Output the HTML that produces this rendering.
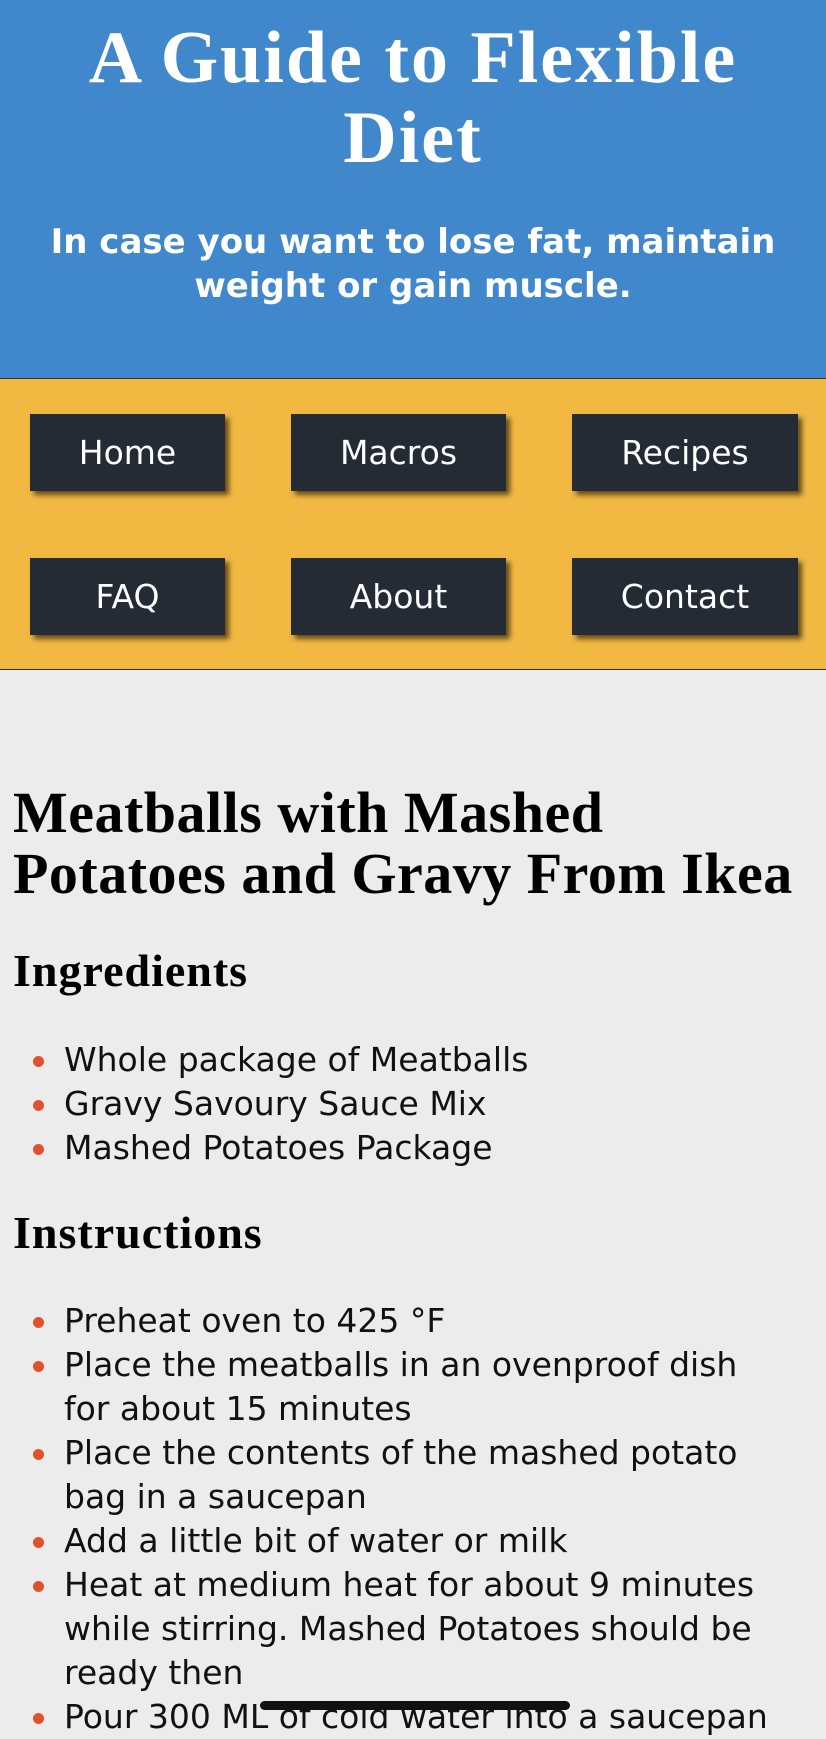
<!DOCTYPE html>
<html><head><style>
body{margin:0;width:826px;height:1718px;overflow:hidden;background:#ececec;font-family:"DejaVu Sans","Liberation Sans",sans-serif;position:relative}
header{background:#4187cb;height:378px;border-bottom:1px solid #333;color:#fff;text-align:center;position:relative}
h1{margin:0;padding-top:18px;font-family:"Liberation Serif",serif;font-weight:bold;font-size:74px;line-height:80px;letter-spacing:2px;white-space:nowrap}
.sub{position:absolute;left:0;right:0;top:220px;margin:0;font-weight:bold;font-size:34px;line-height:44px;white-space:nowrap}
nav{background:#f1b941;height:290px;border-bottom:1px solid #333;position:relative}
nav a{position:absolute;background:#242b34;color:#fff;font-size:33px;display:flex;align-items:center;justify-content:center;height:77px;box-shadow:4px 4px 5px rgba(0,0,0,.6);text-decoration:none}
h2{font-family:"Liberation Serif",serif;font-weight:bold;font-size:58px;line-height:61px;margin:0;position:absolute;top:782px;left:13px;white-space:nowrap;letter-spacing:.5px}
h3{font-family:"Liberation Serif",serif;font-weight:bold;font-size:46px;letter-spacing:1px;margin:0;position:absolute;left:13px}
ul{position:absolute;left:0;margin:0;padding-left:64px;font-size:33px;line-height:44px;color:#111;list-style:none;white-space:nowrap}
li{position:relative}
li:before{content:"";position:absolute;left:-31px;top:18px;width:11px;height:11px;border-radius:50%;background:#e0522e}
</style></head><body>
<header><h1>A Guide to Flexible<br>Diet</h1><p class="sub">In case you want to lose fat, maintain<br>weight or gain muscle.</p></header>
<nav>
<a style="left:30px;top:35px;width:195px">Home</a>
<a style="left:291px;top:35px;width:215px">Macros</a>
<a style="left:572px;top:35px;width:226px">Recipes</a>
<a style="left:30px;top:179px;width:195px">FAQ</a>
<a style="left:291px;top:179px;width:215px">About</a>
<a style="left:572px;top:179px;width:226px">Contact</a>
</nav>
<h2>Meatballs with Mashed<br>Potatoes and Gravy From Ikea</h2>
<h3 style="top:944px">Ingredients</h3>
<ul style="top:1038px">
<li>Whole package of Meatballs</li>
<li>Gravy Savoury Sauce Mix</li>
<li>Mashed Potatoes Package</li>
</ul>
<h3 style="top:1206px">Instructions</h3>
<ul style="top:1299px">
<li>Preheat oven to 425 °F</li>
<li>Place the meatballs in an ovenproof dish<br>for about 15 minutes</li>
<li>Place the contents of the mashed potato<br>bag in a saucepan</li>
<li>Add a little bit of water or milk</li>
<li>Heat at medium heat for about 9 minutes<br>while stirring. Mashed Potatoes should be<br>ready then</li>
<li>Pour 300 ML of cold water into a saucepan</li>
</ul>
<div style="position:absolute;left:260px;top:1701px;width:310px;height:9px;border-radius:5px;background:#111"></div>
</body></html>
